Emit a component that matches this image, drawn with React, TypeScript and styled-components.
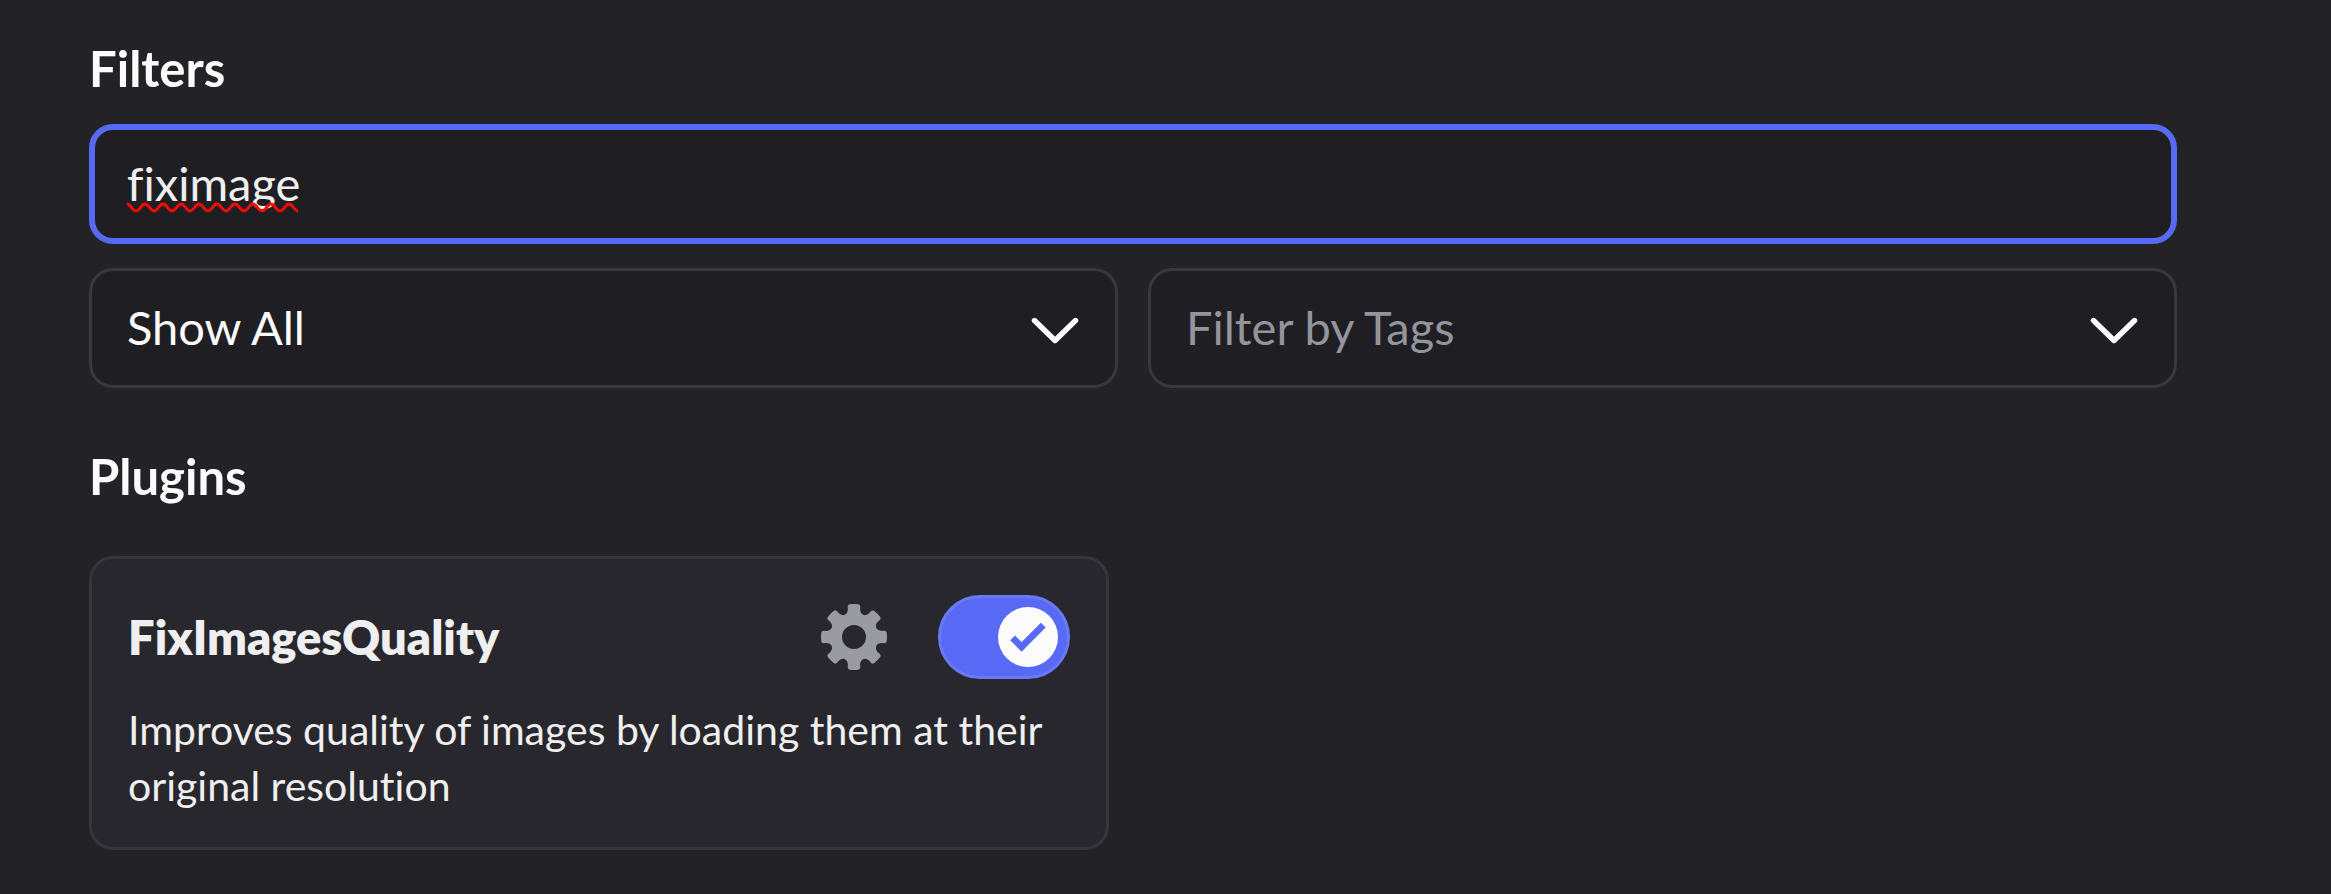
import React, { useState } from "react";
import styled, { createGlobalStyle, css } from "styled-components";

const color = {
  page: "#232227",
  field: "#1f1e23",
  fieldBorder: "#39383e",
  card: "#28272d",
  cardBorder: "#36353b",
  brand: "#5869f5",
  brandBorder: "#6a7af6",
  heading: "#fbfbfb",
  text: "#efeff0",
  muted: "#94959c",
  icon: "#9a9ba1",
};

const GlobalStyle = createGlobalStyle`
  *, *::before, *::after { box-sizing: border-box; }
  html { background: ${color.page}; }
  body {
    margin: 0;
    background: ${color.page};
    color: ${color.text};
    font-family: Lato, "Open Sans", sans-serif;
    font-variant-ligatures: none;
  }
`;

const Page = styled.main`
  padding: 38px 154px 44px 89px;
`;

const Section = styled.section`
  & + & {
    margin-top: 58px;
  }
`;

const Heading = styled.h2<{ $gap: number }>`
  margin: 0 0 ${(p) => p.$gap}px;
  color: ${color.heading};
  font-size: 49px;
  font-weight: 700;
  line-height: 60px;
`;

const fieldBox = css`
  display: block;
  width: 100%;
  height: 120px;
  margin: 0;
  border-radius: 24px;
  background: ${color.field};
  font-family: inherit;
  font-size: 47px;
  font-weight: 400;
  font-variant-ligatures: none;
  outline: none;
`;

const SearchField = styled.div`
  position: relative;
`;

const SearchInput = styled.input`
  ${fieldBox}
  padding: 0 32px 2px;
  border: 6px solid ${color.brand};
  color: ${color.text};
`;

const Misspelling = styled.svg`
  position: absolute;
  left: 38px;
  bottom: 30px;
  pointer-events: none;
`;

const FilterRow = styled.div`
  display: grid;
  grid-template-columns: 1fr 1fr;
  gap: 30px;
  margin-top: 24px;
`;

const SelectField = styled.div`
  position: relative;
`;

const Select = styled.select<{ $placeholder?: boolean }>`
  ${fieldBox}
  appearance: none;
  padding: 0 96px 2px 35px;
  border: 3px solid ${color.fieldBorder};
  color: ${(p) => (p.$placeholder ? color.muted : color.heading)};
`;

const Chevron = styled.svg`
  position: absolute;
  top: 36px;
  right: 39px;
  width: 48px;
  height: 48px;
  pointer-events: none;
`;

const CardGrid = styled.div`
  display: grid;
  grid-template-columns: 1fr 1fr;
  gap: 48px;
`;

const Card = styled.article`
  padding: 36px 36px 33px;
  border: 3px solid ${color.cardBorder};
  border-radius: 24px;
  background: ${color.card};
`;

const CardHeader = styled.header`
  display: flex;
  align-items: center;
  gap: 48px;
  height: 84px;
  margin-bottom: 23px;
`;

const CardTitle = styled.h3`
  flex: 1;
  margin: 0;
  font-size: 47px;
  font-weight: 800;
  line-height: 60px;
`;

const IconButton = styled.button`
  display: block;
  width: 72px;
  height: 72px;
  padding: 0;
  border: 0;
  background: none;
  color: ${color.icon};
  cursor: pointer;
`;

const Switch = styled.span`
  position: relative;
  display: block;
  width: 132px;
  height: 84px;
`;

const SwitchInput = styled.input`
  appearance: none;
  display: block;
  width: 100%;
  height: 100%;
  margin: 0;
  border: 3px solid ${color.brandBorder};
  border-radius: 42px;
  background: ${color.brand};
  cursor: pointer;

  &:not(:checked) {
    border-color: ${color.fieldBorder};
    background: ${color.field};
  }
`;

const Knob = styled.svg<{ $on: boolean }>`
  position: absolute;
  top: 12px;
  left: ${(p) => (p.$on ? 60 : 12)}px;
  width: 60px;
  height: 60px;
  pointer-events: none;
`;

const Description = styled.p`
  margin: 0;
  font-size: 41px;
  line-height: 56px;
`;

function ChevronIcon() {
  return (
    <Chevron viewBox="0 0 48 48" fill="none" aria-hidden="true">
      <path
        d="M3.5 16.5 24 36.5 44.5 16.5"
        stroke={color.heading}
        strokeWidth="5.4"
        strokeLinecap="round"
        strokeLinejoin="round"
      />
    </Chevron>
  );
}

function GearIcon() {
  return (
    <svg width="72" height="72" viewBox="0 0 24 24" fill="currentColor" aria-hidden="true">
      <path
        fillRule="evenodd"
        clipRule="evenodd"
        d="M10.56 1.1c-.46.05-.7.53-.64.98.18 1.16-.19 2.2-.98 2.53-.8.33-1.79-.15-2.49-1.1-.27-.36-.78-.52-1.14-.24-.77.59-1.45 1.27-2.04 2.04-.28.36-.12.87.24 1.14.96.7 1.43 1.7 1.1 2.49-.33.8-1.37 1.16-2.53.98-.45-.07-.93.18-.99.64a11.1 11.1 0 0 0 0 2.88c.06.46.54.7.99.64 1.16-.18 2.2.19 2.53.98.33.8-.14 1.79-1.1 2.49-.36.27-.52.78-.24 1.14.59.77 1.27 1.45 2.04 2.04.36.28.87.12 1.14-.24.7-.95 1.7-1.43 2.49-1.1.8.33 1.16 1.37.98 2.53-.07.45.18.93.64.99a11.1 11.1 0 0 0 2.88 0c.46-.06.7-.54.64-.99-.18-1.16.19-2.2.98-2.53.8-.33 1.79.14 2.49 1.1.27.36.78.52 1.14.24.77-.59 1.45-1.27 2.04-2.04.28-.36.12-.87-.24-1.14-.96-.7-1.43-1.7-1.1-2.49.33-.8 1.37-1.16 2.53-.98.45.07.93-.18.99-.64a11.1 11.1 0 0 0 0-2.88c-.06-.46-.54-.7-.99-.64-1.16.18-2.2-.19-2.53-.98-.33-.8.14-1.79 1.1-2.49.36-.27.52-.78.24-1.14a11.07 11.07 0 0 0-2.04-2.04c-.36-.28-.87-.12-1.14.24-.7.96-1.7 1.43-2.49 1.1-.8-.33-1.16-1.37-.98-2.53.07-.45-.18-.93-.64-.99a11.1 11.1 0 0 0-2.88 0ZM16 12a4 4 0 1 1-8 0 4 4 0 0 1 8 0Z"
      />
    </svg>
  );
}

// Nineteen half-periods, alternately falling and rising.
const WAVE =
  "M0 3" + Array.from({ length: 19 }, (_, i) => `c4 0 5 ${i % 2 ? "-7 9 -7" : "7 9 7"}`).join("");

export default function App() {
  const [query, setQuery] = useState("fiximage");
  const [show, setShow] = useState("all");
  const [tag, setTag] = useState("");
  const [enabled, setEnabled] = useState(true);

  return (
    <>
      <GlobalStyle />
      <Page>
        <Section aria-labelledby="filters-heading">
          <Heading id="filters-heading" $gap={26}>Filters</Heading>
          <SearchField>
            <SearchInput
              type="text"
              aria-label="Search for a plugin"
              spellCheck={false}
              value={query}
              onChange={(e) => setQuery(e.target.value)}
            />
            {query === "fiximage" && (
              <Misspelling width="171" height="13" viewBox="0 0 171 13" fill="none" aria-hidden="true">
                <path d={WAVE} stroke="#ff0800" strokeWidth="3" />
              </Misspelling>
            )}
          </SearchField>
          <FilterRow>
            <SelectField>
              <Select aria-label="Show" value={show} onChange={(e) => setShow(e.target.value)}>
                <option value="all">Show All</option>
              </Select>
              <ChevronIcon />
            </SelectField>
            <SelectField>
              <Select
                aria-label="Tags"
                $placeholder={tag === ""}
                value={tag}
                onChange={(e) => setTag(e.target.value)}
              >
                <option value="">Filter by Tags</option>
              </Select>
              <ChevronIcon />
            </SelectField>
          </FilterRow>
        </Section>

        <Section aria-labelledby="plugins-heading">
          <Heading id="plugins-heading" $gap={50}>Plugins</Heading>
          <CardGrid>
            <Card>
              <CardHeader>
                <CardTitle id="plugin-name">FixImagesQuality</CardTitle>
                <IconButton type="button" aria-label="Plugin settings">
                  <GearIcon />
                </IconButton>
                <Switch>
                  <SwitchInput
                    type="checkbox"
                    role="switch"
                    aria-labelledby="plugin-name"
                    checked={enabled}
                    onChange={(e) => setEnabled(e.target.checked)}
                  />
                  <Knob $on={enabled} viewBox="0 0 20 20" aria-hidden="true">
                    <circle cx="10" cy="10" r="10" fill={color.heading} />
                    {enabled && (
                      <g fill={color.brand}>
                        <path d="M7.89561 14.8538L6.30462 13.2629L14.3099 5.25755L15.9009 6.84854L7.89561 14.8538Z" />
                        <path d="M4.08643 11.0903L5.67742 9.49929L9.4485 13.2704L7.85751 14.8614L4.08643 11.0903Z" />
                      </g>
                    )}
                  </Knob>
                </Switch>
              </CardHeader>
              <Description>
                Improves quality of images by loading them at their original resolution
              </Description>
            </Card>
          </CardGrid>
        </Section>
      </Page>
    </>
  );
}
